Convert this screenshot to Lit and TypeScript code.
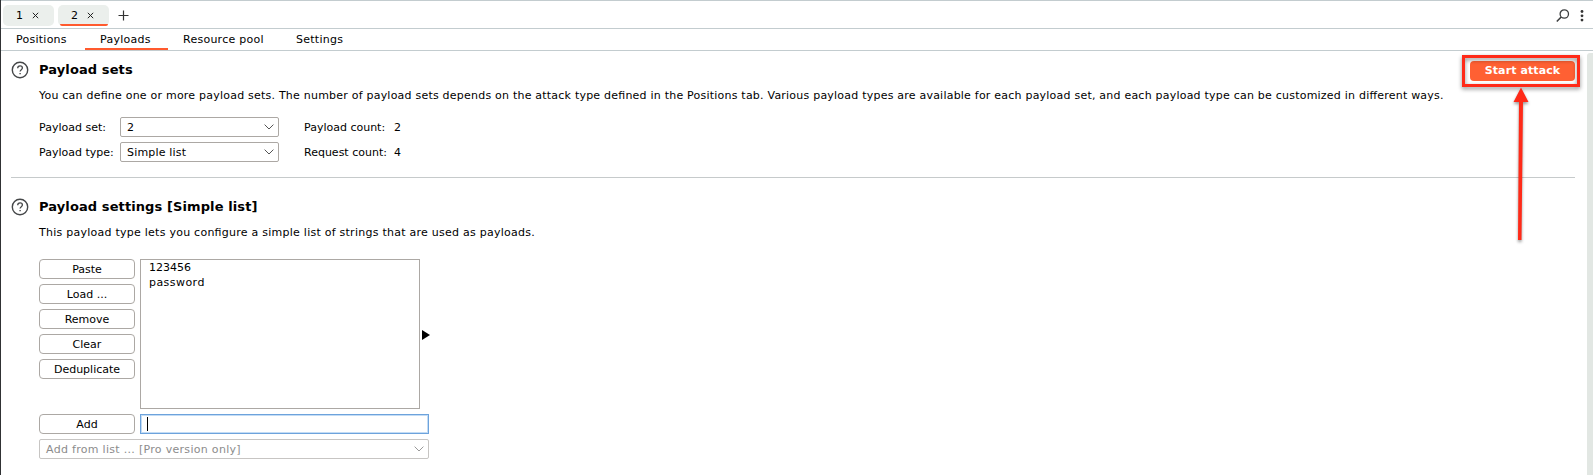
import { LitElement, html, css, svg } from "lit";

const chevron = html`<svg class="chevron" width="10" height="6" viewBox="0 0 10 6"><path d="M.6.6 5 5 9.4.6" fill="none" stroke="currentColor" stroke-width="1"/></svg>`;
const help = html`<svg class="help" width="18" height="18" viewBox="0 0 18 18" fill="none" stroke="#454749"><circle cx="9" cy="9" r="7.7" stroke-width="1.4"/><path d="M6.7 7.3c0-1.5 1-2.4 2.4-2.4s2.3.9 2.3 2.1c0 1.7-2.3 1.7-2.3 3.6" stroke-width="1.3"/><path d="M9.1 11.9v1.3" stroke-width="1.4"/></svg>`;
const cross = svg`<path d="m.8.8 5.4 5.4M6.2.8.8 6.2" stroke="#222" stroke-width="1"/>`;

class AppRoot extends LitElement {
  static styles = css`
    :host { display: block; font: 11px/15px "DejaVu Sans", sans-serif; color: #000; }
    * { box-sizing: border-box; }
    svg { display: block; flex: none; }
    .window { position: relative; width: 1593px; height: 475px; overflow: hidden; background: #fff; border-left: 1px solid #303234; display: flex; flex-direction: column; white-space: nowrap; }
    .attacks { height: 29px; flex: none; border-top: 1px solid #c3cccf; border-bottom: 1px solid #c3cccf; display: flex; align-items: flex-start; padding: 4px 5px 0 2px; }
    .attack { width: 51px; height: 21px; margin-right: 4px; border-radius: 5px; background: #ebefec; display: flex; align-items: center; padding: 0 0 1px 13px; gap: 9px; position: relative; }
    .attack.on::after { content: ""; position: absolute; left: 2px; right: 1px; bottom: 0; height: 2px; background: #ff5a2e; border-radius: 0 0 2px 2px; }
    .attack span { width: 7px; }
    .plus { margin: 5px 0 0 5px; }
    .search { margin: 4px 10px 0 auto; }
    .dots { margin: 5px 4px 0 0; }
    .tabs { height: 22px; flex: none; display: flex; border-bottom: 1px solid #c3cccf; letter-spacing: .25px; font-feature-settings: "liga" 1; }
    .tab { height: 21px; padding: 3px 15px 0; }
    .tab.on { border-bottom: 2px solid #ff5a2e; }
    .t1 { width: 84px; } .t2 { width: 83px; } .t3 { width: 113px; }
    .body { flex: 1; display: flex; min-height: 0; }
    .content { width: 1575px; padding-left: 10px; display: flex; flex-direction: column; }
    .head { display: flex; align-items: center; height: 20px; padding-right: 1px; }
    .help { margin-top: -2px; }
    h2 { font-size: 13px; line-height: 18px; margin: -2px 0 0 10px; letter-spacing: .1px; font-feature-settings: "liga" 1; }
    .start { margin-left: auto; width: 105px; height: 20px; border-radius: 4px; background: #ff6033; color: #fff; font-weight: bold; line-height: 20px; text-align: center; position: relative; letter-spacing: .1px; font-feature-settings: "liga" 1; }
    .first { margin-top: 10px; }
    .second { margin-top: 20px; }
    .text { margin: 7px 0 0 28px; letter-spacing: .22px; font-feature-settings: "liga" 1; }
    .text.b { letter-spacing: .25px; }
    .grid { margin: 14px 0 0 28px; display: grid; grid-template-columns: 81px 159px 25px 90px 20px; grid-auto-rows: 20px; row-gap: 5px; align-items: center; }
    .select { height: 20px; border: 1px solid #aca8a4; border-radius: 2px; display: flex; align-items: center; justify-content: space-between; padding: 0 4px 0 6px; letter-spacing: .18px; }
    .chevron { color: #555; }
    .label, .value { margin-top: 0; }
    .col4 { grid-column: 4; }
    .line { height: 1px; flex: none; background: #c6cacb; margin: 15px 0 0 0; width: 1564px; }
    .editor { margin: 19px 0 0 28px; display: flex; gap: 5px; }
    .buttons { display: flex; flex-direction: column; gap: 5px; }
    .button { width: 96px; height: 20px; border: 1px solid #aca8a4; border-radius: 4px; line-height: 19px; text-align: center; }
    .list { width: 280px; height: 150px; border: 1px solid #aca8a4; padding: 0 8px; }
    .password { letter-spacing: .45px; }
    .grip { margin: 71px 0 0 -3px; }
    .add { display: flex; gap: 5px; margin: 5px 0 5px 28px; }
    .input { width: 289px; height: 20px; border: 1px solid #6da3dc; box-shadow: inset 0 0 0 1px #c3dcf5; padding: 2px 6px; }
    .caret { width: 1px; height: 14px; background: #000; }
    .pro { width: 390px; margin-left: 28px; color: #8c8c8c; border-color: #c7c5c3; letter-spacing: .3px; }
    .pro .chevron { color: #999; }
    .scroll { width: 6px; margin: 2px 0 0 auto; background: #e2e7e3; border-radius: 3px 0 0 0; }
    .frame { position: absolute; left: 1461px; top: 55px; width: 118px; height: 32px; border: 3px solid #ff2a18; filter: drop-shadow(0 2px 2px #0007); }
    .arrow { position: absolute; left: 1505px; top: 84px; filter: drop-shadow(0 2px 1.5px #0006); }
  `;
  select(text: string, cls = "") {
    return html`<div class="select ${cls}"><span class="label">${text}</span>${chevron}</div>`;
  }
  render() {
    return html`<div class="window">
      <div class="attacks">
        <div class="attack"><span>1</span><svg width="7" height="7">${cross}</svg></div>
        <div class="attack on"><span>2</span><svg width="7" height="7">${cross}</svg></div>
        <svg class="plus" width="11" height="11"><path d="M5.5.5v10M.5 5.5h10" stroke="#333" stroke-width="1.2"/></svg>
        <svg class="search" width="14" height="14" fill="none" stroke="#3d3f40"><circle cx="8.3" cy="5" r="4.2" stroke-width="1.3"/><path d="M5.2 8 .8 12.5" stroke-width="1.6"/></svg>
        <svg class="dots" width="4" height="12" fill="#333"><circle cx="2" cy="1.5" r="1.4"/><circle cx="2" cy="5.8" r="1.4"/><circle cx="2" cy="10.1" r="1.4"/></svg>
      </div>
      <div class="tabs">
        <div class="tab t1">Positions</div><div class="tab t2 on">Payloads</div><div class="tab t3">Resource pool</div><div class="tab">Settings</div>
      </div>
      <div class="body">
        <div class="content">
          <div class="head first">${help}<h2>Payload sets</h2><div class="start">Start attack</div></div>
          <div class="text">You can define one or more payload sets. The number of payload sets depends on the attack type defined in the Positions tab. Various payload types are available for each payload set, and each payload type can be customized in different ways.</div>
          <div class="grid">
            <span class="label">Payload set:</span>${this.select("2")}<span class="label col4">Payload count:</span><span class="value">2</span>
            <span class="label">Payload type:</span>${this.select("Simple list")}<span class="label col4">Request count:</span><span class="value">4</span>
          </div>
          <div class="line"></div>
          <div class="head second">${help}<h2>Payload settings [Simple list]</h2></div>
          <div class="text b">This payload type lets you configure a simple list of strings that are used as payloads.</div>
          <div class="editor">
            <div class="buttons">${["Paste", "Load ...", "Remove", "Clear", "Deduplicate"].map((b) => html`<div class="button">${b}</div>`)}</div>
            <div class="list"><div>123456</div><div class="password">password</div></div>
            <svg class="grip" width="8" height="10"><path d="M0 0 8 5 0 10z"/></svg>
          </div>
          <div class="add"><div class="button">Add</div><div class="input"><div class="caret"></div></div></div>
          ${this.select("Add from list ... [Pro version only]", "pro")}
        </div>
        <div class="scroll"></div>
      </div>
      <div class="frame"></div>
      <svg class="arrow" width="30" height="160"><path d="M15 3.5 22.5 18H17L15.500 156H12L13 18H7.500Z" fill="#ff2a18"/></svg>
    </div>`;
  }
}
customElements.define("app-root", AppRoot);
